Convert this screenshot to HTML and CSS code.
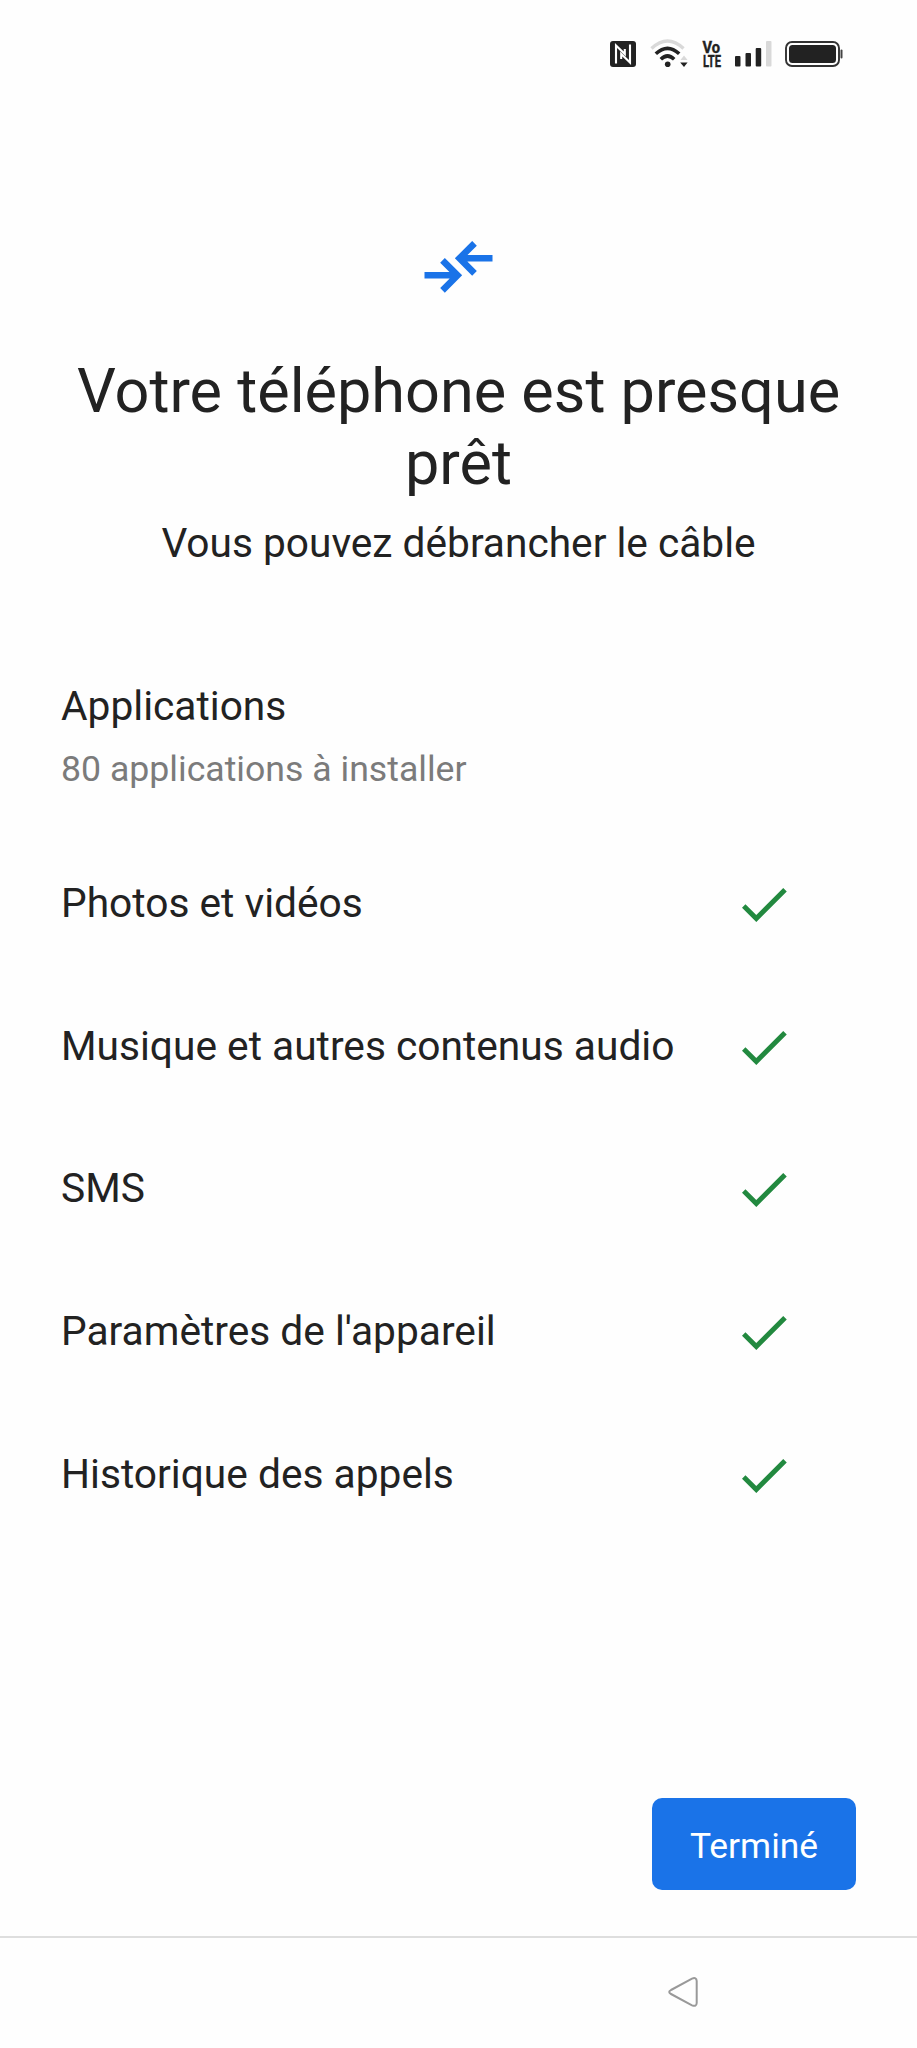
FILE: index.html
```html
<!DOCTYPE html>
<html lang="fr">
<head>
  <meta charset="UTF-8">
  <meta name="viewport" content="width=device-width, initial-scale=1.0">
  <title>Votre téléphone est presque prêt</title>
  <link rel="stylesheet" href="styles.css">
</head>
<body>
  <div class="status-bar">
    <svg class="icon-nfc" width="26" height="26" viewBox="0 0 26 26">
      <rect width="26" height="26" rx="3" fill="#222"/>
      <path d="M6 22.5V4.5L14.8 13V8M20 3.5v18L11.2 13v5" fill="none" stroke="#fff" stroke-width="2.1"/>
    </svg>
    <svg class="icon-wifi" width="38" height="29" viewBox="0 0 38 29">
      <path d="M1.5 9.5Q17.5-5.5 33.5 9.5" fill="none" stroke="#d9d9d9" stroke-width="3.4"/>
      <path d="M5.8 14.8Q17.5 3.8 29.2 14.8M10.8 20.2Q17.5 13.8 24.2 20.2" fill="none" stroke="#222" stroke-width="3.6"/>
      <circle cx="17.7" cy="25.2" r="2.8" fill="#222"/>
      <path d="M30.5 21l3.5-4.5 3.5 4.5z" fill="#d9d9d9"/>
      <path d="M30.2 23.5h7.4L34 28z" fill="#222"/>
    </svg>
    <svg class="icon-volte" width="20" height="27" viewBox="0 0 20 27">
      <text x="0.5" y="12" textLength="17.5" lengthAdjust="spacingAndGlyphs">Vo</text>
      <text x="1" y="25.5" textLength="18" lengthAdjust="spacingAndGlyphs">LTE</text>
    </svg>
    <svg class="icon-signal" width="37" height="26" viewBox="0 0 37 26">
      <g fill="#222">
        <rect x="0" y="15" width="5.5" height="10.5" rx="1"/>
        <rect x="10.5" y="12" width="5.5" height="13.5" rx="1"/>
        <rect x="20.7" y="7" width="5.5" height="18.5" rx="1"/>
      </g>
      <rect x="31" y="0" width="5.5" height="25.5" rx="1" fill="#d9d9d9"/>
    </svg>
    <svg class="icon-battery" width="58" height="26" viewBox="0 0 58 26">
      <rect x="1" y="1" width="53" height="24" rx="6" fill="none" stroke="#333" stroke-width="1.9"/>
      <rect x="4" y="4" width="47" height="18" rx="3.5" fill="#222"/>
      <rect x="55.5" y="8.5" width="2" height="9" rx="1" fill="#444"/>
    </svg>
  </div>

  <div class="header">
    <svg class="transfer-icon" width="70" height="52" viewBox="0 0 70 52" fill="none" stroke="#1a73e8" stroke-width="6.6">
      <path d="M0.5 34.3h33M18.5 19.3l15 15-15 15"/>
      <path d="M68.5 17.3h-33M50.5 2.3l-15 15 15 15"/>
    </svg>
    <h1 class="title">Votre téléphone est presque prêt</h1>
    <p class="subtitle">Vous pouvez débrancher le câble</p>
  </div>

  <div class="apps">
    <div class="label">Applications</div>
    <div class="apps-detail">80 applications à installer</div>
  </div>

  <ul class="items">
    <li class="item">
      <span class="label">Photos et vidéos</span>
      <svg class="check" viewBox="0 0 45 34"><path d="M1.7 18l12.6 12.5L43 1.8"/></svg>
    </li>
    <li class="item">
      <span class="label">Musique et autres contenus audio</span>
      <svg class="check" viewBox="0 0 45 34"><path d="M1.7 18l12.6 12.5L43 1.8"/></svg>
    </li>
    <li class="item">
      <span class="label">SMS</span>
      <svg class="check" viewBox="0 0 45 34"><path d="M1.7 18l12.6 12.5L43 1.8"/></svg>
    </li>
    <li class="item">
      <span class="label">Paramètres de l'appareil</span>
      <svg class="check" viewBox="0 0 45 34"><path d="M1.7 18l12.6 12.5L43 1.8"/></svg>
    </li>
    <li class="item">
      <span class="label">Historique des appels</span>
      <svg class="check" viewBox="0 0 45 34"><path d="M1.7 18l12.6 12.5L43 1.8"/></svg>
    </li>
  </ul>

  <div class="footer">
    <button class="done-button">Terminé</button>
  </div>

  <div class="nav-bar">
    <svg class="back-icon" width="30" height="30" viewBox="0 0 30 30">
      <path d="M3 13L24 1.6Q28.5-.2 28.7 4V26Q28.5 30 24 28.4L3 17Q-.6 15 3 13z" fill="none" stroke="#999" stroke-width="2"/>
    </svg>
  </div>
</body>
</html>
```
FILE: styles.css
```css
:root {
  --primary-color: #1a73e8;
  --success-color: #22893f;
  --text-color: #222222;
  --text-secondary: #7b7b7b;
  --border-color: #dedede;
}

* {
  box-sizing: border-box;
}

body {
  display: flex;
  flex-direction: column;
  height: 2048px;
  margin: 0;
  font-family: Roboto, sans-serif;
  color: var(--text-color);
  background: #fefefe;
}

.status-bar {
  display: flex;
  align-items: flex-start;
  justify-content: flex-end;
  height: 108px;
  padding: 41px 74px 0 0;
}

.icon-nfc {
  margin-right: 14px;
}

.icon-wifi {
  margin: -2px 14px 0 0;
}

.icon-volte {
  margin-right: 13px;
  overflow: visible;
}

.icon-volte text {
  font-size: 16px;
  font-weight: 700;
  fill: var(--text-color);
  stroke: var(--text-color);
  stroke-width: 0.4;
}

.icon-signal {
  margin-right: 13px;
}

.header {
  display: flex;
  flex-direction: column;
  align-items: center;
  height: 574px;
  padding: 133px 60px 0;
  text-align: center;
}

.title {
  margin: 62px 0 20px;
  font-size: 61.2px;
  font-weight: 400;
  line-height: 72px;
}

.subtitle {
  margin: 0;
  font-size: 40.65px;
  line-height: 48px;
}

.apps {
  height: 150px;
  padding-left: 61px;
}

.label {
  font-size: 40.7px;
  line-height: 48px;
}

.apps-detail {
  margin-top: 18px;
  font-size: 35.65px;
  line-height: 42px;
  color: var(--text-secondary);
}

.items {
  margin: 0;
  padding: 0 130px 0 61px;
  list-style: none;
}

.item {
  display: flex;
  align-items: center;
  justify-content: space-between;
  height: 142.6px;
}

.check {
  width: 45px;
  height: 34px;
  margin-top: 4px;
  fill: none;
  stroke: var(--success-color);
  stroke-width: 5;
}

.footer {
  display: flex;
  justify-content: flex-end;
  margin-top: auto;
  padding: 0 61px 46px 0;
}

.done-button {
  width: 204px;
  height: 92px;
  padding: 3px 0 0;
  border: none;
  border-radius: 10px;
  background: var(--primary-color);
  color: white;
  font-family: inherit;
  font-size: 35.4px;
}

.nav-bar {
  height: 112px;
  padding: 39px 0 0 668px;
  border-top: 2px solid var(--border-color);
}
```
